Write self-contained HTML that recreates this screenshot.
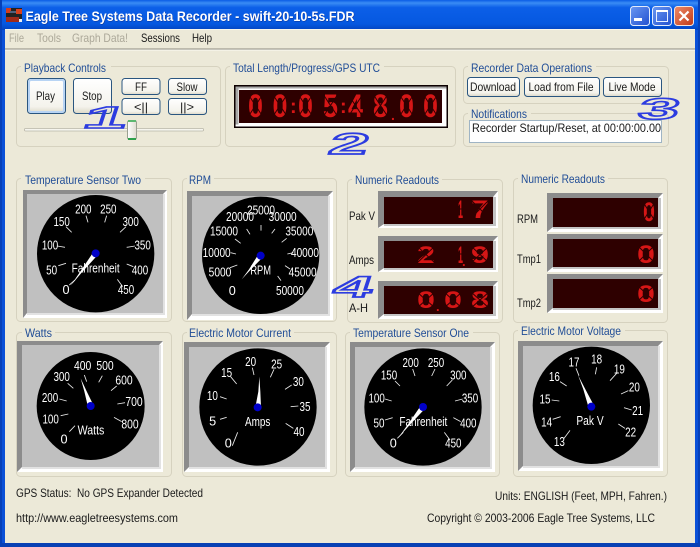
<!DOCTYPE html>
<html><head><meta charset="utf-8"><title>Eagle Tree Systems Data Recorder</title>
<style>
html,body{margin:0;padding:0;background:#ece9d8;width:700px;height:547px;overflow:hidden}
svg{display:block}
text{font-family:"Liberation Sans",sans-serif;font-size:11.700px;fill:#1a1a1a}
.g{fill:#1f4c96}
.m{fill:#aca899}
.grp{fill:none;stroke:#d6d2bf;stroke-width:1}
.bg{fill:#ece9d8}
.btn{fill:url(#bt);stroke:#2a5680;stroke-width:1}
.t{font-size:38px;fill:#fff;text-anchor:middle}
.tk{stroke:#e8e8e8;stroke-width:2.600;fill:none}
.led{font-weight:bold;fill:#d61616}
.seg{stroke:#2e0000;fill:none;stroke-width:1}
.an{font-weight:bold;fill:none;stroke:#2c3ce0;stroke-width:3;vector-effect:non-scaling-stroke}
</style></head><body>
<svg width="700" height="547" viewBox="0 0 700 547" xmlns="http://www.w3.org/2000/svg">
<defs>
<linearGradient id="tb" x1="0" y1="0" x2="0" y2="1"><stop offset="0" stop-color="#0a5ce6"/><stop offset=".1" stop-color="#3a8cf4"/><stop offset=".25" stop-color="#0c5fe8"/><stop offset=".8" stop-color="#0558e0"/><stop offset="1" stop-color="#0344c0"/></linearGradient>
<linearGradient id="bt" x1="0" y1="0" x2="0" y2="1"><stop offset="0" stop-color="#ffffff"/><stop offset=".8" stop-color="#f4f3ec"/><stop offset="1" stop-color="#dcd8c8"/></linearGradient>
<linearGradient id="wb" x1="0" y1="0" x2="1" y2="1"><stop offset="0" stop-color="#6a98f2"/><stop offset="1" stop-color="#2250d0"/></linearGradient>
<linearGradient id="wr" x1="0" y1="0" x2="1" y2="1"><stop offset="0" stop-color="#ee8a68"/><stop offset="1" stop-color="#c03a18"/></linearGradient>
<linearGradient id="th" x1="0" y1="0" x2="1" y2="0"><stop offset="0" stop-color="#fff"/><stop offset="1" stop-color="#dedcd0"/></linearGradient>
</defs>

<!-- window frame -->
<rect width="700" height="547" fill="#0a50d8"/>
<rect x="0" y="0" width="700" height="30" fill="url(#tb)"/>
<rect x="0" y="543" width="700" height="4" fill="#0840b4"/>
<rect x="0" y="0" width="2" height="547" fill="#0640b8"/>
<rect x="698" y="0" width="2" height="547" fill="#0640b8"/>
<rect x="5" y="29" width="690" height="514" fill="#ece9d8"/>
<rect x="5" y="29" width="690" height="1" fill="#f8f6ec"/>
<rect x="5" y="48.500" width="690" height="1" fill="#8e8c80"/>
<rect x="5" y="49.500" width="690" height="1" fill="#fbfaf3"/>

<!-- app icon -->
<rect x="6" y="8" width="16" height="14" fill="#222"/>
<rect x="6" y="8" width="5" height="5" fill="#d43c1c"/>
<rect x="16" y="9" width="6" height="5" fill="#d8401c"/>
<rect x="10" y="11" width="6" height="2" fill="#50607a"/>
<rect x="6" y="17" width="13" height="5" fill="#a02a18"/>
<rect x="19" y="19" width="3" height="3" fill="#f0f0f0"/>

<text x="26" y="21.500" textLength="329" lengthAdjust="spacingAndGlyphs" style="font-size:13.500px;font-weight:bold;fill:#0a2f90">Eagle Tree Systems Data Recorder - swift-20-10-5s.FDR</text>
<text x="25.500" y="21" textLength="329" lengthAdjust="spacingAndGlyphs" style="font-size:13.500px;font-weight:bold;fill:#fff">Eagle Tree Systems Data Recorder - swift-20-10-5s.FDR</text>

<!-- window buttons -->
<rect x="630.500" y="6.500" width="19" height="19" rx="3" fill="url(#wb)" stroke="#e4ecfc"/>
<rect x="634" y="18" width="8" height="3" fill="#fff"/>
<rect x="652.500" y="6.500" width="19" height="19" rx="3" fill="url(#wb)" stroke="#e4ecfc"/>
<rect x="656.500" y="10.500" width="11" height="11" fill="none" stroke="#e8f0ff"/>
<rect x="656" y="10" width="12" height="2" fill="#fff"/>
<rect x="674.500" y="6.500" width="19" height="19" rx="3" fill="url(#wr)" stroke="#f4e4dc"/>
<path d="M679.500 11.500l9 9M688.500 11.500l-9 9" stroke="#fff" stroke-width="2.200" fill="none"/>

<!-- menu -->
<text class="m" x="9" y="42" textLength="15" lengthAdjust="spacingAndGlyphs">File</text>
<text class="m" x="37" y="42" textLength="24" lengthAdjust="spacingAndGlyphs">Tools</text>
<text class="m" x="72" y="42" textLength="56" lengthAdjust="spacingAndGlyphs">Graph Data!</text>
<text x="141" y="42" textLength="39" lengthAdjust="spacingAndGlyphs">Sessions</text>
<text x="192" y="42" textLength="20" lengthAdjust="spacingAndGlyphs">Help</text>

<!-- group boxes -->
<rect class="grp" x="16.500" y="66.500" width="204" height="80" rx="4"/>
<rect class="bg" x="21" y="62" width="90" height="10"/>
<text class="g" x="24" y="72" textLength="82" lengthAdjust="spacingAndGlyphs">Playback Controls</text>

<rect class="grp" x="225.500" y="66.500" width="230" height="80" rx="4"/>
<rect class="bg" x="230" y="62" width="154" height="10"/>
<text class="g" x="233" y="72" textLength="147" lengthAdjust="spacingAndGlyphs">Total Length/Progress/GPS UTC</text>

<rect class="grp" x="463.500" y="66.500" width="205" height="37" rx="4"/>
<rect class="bg" x="468" y="62" width="128" height="10"/>
<text class="g" x="471" y="72" textLength="121" lengthAdjust="spacingAndGlyphs">Recorder Data Operations</text>

<rect class="grp" x="463.500" y="113.500" width="205" height="33" rx="4"/>
<rect class="bg" x="468" y="109" width="63" height="10"/>
<text class="g" x="471" y="118" textLength="56" lengthAdjust="spacingAndGlyphs">Notifications</text>

<rect class="grp" x="16.500" y="178.500" width="155" height="143" rx="4"/>
<rect class="bg" x="21" y="174" width="124" height="10"/>
<text class="g" x="25" y="184" textLength="116" lengthAdjust="spacingAndGlyphs">Temperature Sensor Two</text>

<rect class="grp" x="182.500" y="178.500" width="154" height="143" rx="4"/>
<rect class="bg" x="187" y="174" width="27" height="10"/>
<text class="g" x="189" y="184" textLength="22" lengthAdjust="spacingAndGlyphs">RPM</text>

<rect class="grp" x="347.500" y="179.500" width="155" height="143" rx="4"/>
<rect class="bg" x="352" y="175" width="90" height="10"/>
<text class="g" x="355" y="184" textLength="84" lengthAdjust="spacingAndGlyphs">Numeric Readouts</text>

<rect class="grp" x="513.500" y="178.500" width="154" height="144" rx="4"/>
<rect class="bg" x="518" y="174" width="90" height="10"/>
<text class="g" x="521" y="183" textLength="84" lengthAdjust="spacingAndGlyphs">Numeric Readouts</text>

<rect class="grp" x="16.500" y="332.500" width="155" height="144" rx="4"/>
<rect class="bg" x="22" y="328" width="33" height="10"/>
<text class="g" x="25" y="337" textLength="27" lengthAdjust="spacingAndGlyphs">Watts</text>

<rect class="grp" x="182.500" y="332.500" width="154" height="144" rx="4"/>
<rect class="bg" x="187" y="328" width="107" height="10"/>
<text class="g" x="189" y="337" textLength="102" lengthAdjust="spacingAndGlyphs">Electric Motor Current</text>

<rect class="grp" x="345.500" y="332.500" width="154" height="144" rx="4"/>
<rect class="bg" x="350" y="328" width="123" height="10"/>
<text class="g" x="353" y="337" textLength="116" lengthAdjust="spacingAndGlyphs">Temperature Sensor One</text>

<rect class="grp" x="513.500" y="330.500" width="154" height="146" rx="4"/>
<rect class="bg" x="518" y="326" width="107" height="10"/>
<text class="g" x="521" y="335" textLength="100" lengthAdjust="spacingAndGlyphs">Electric Motor Voltage</text>

<!-- playback buttons -->
<rect x="27.500" y="78.500" width="38" height="35" rx="3" fill="url(#bt)" stroke="#2a5680"/>
<rect x="29" y="80" width="35" height="32" rx="2" fill="none" stroke="#b8d4f4" stroke-width="2"/>
<text x="36" y="100" textLength="19" lengthAdjust="spacingAndGlyphs">Play</text>
<rect class="btn" x="73.500" y="78.500" width="38" height="35" rx="3"/>
<text x="82" y="100" textLength="20" lengthAdjust="spacingAndGlyphs">Stop</text>
<rect class="btn" x="122" y="78.500" width="38" height="16" rx="3"/>
<text x="135" y="91" textLength="12" lengthAdjust="spacingAndGlyphs">FF</text>
<rect class="btn" x="168.500" y="78.500" width="38" height="16" rx="3"/>
<text x="176.500" y="91" textLength="21" lengthAdjust="spacingAndGlyphs">Slow</text>
<rect class="btn" x="122" y="98.500" width="38" height="16" rx="3"/>
<text x="134" y="111" textLength="14" lengthAdjust="spacingAndGlyphs">&lt;||</text>
<rect class="btn" x="168.500" y="98.500" width="38" height="16" rx="3"/>
<text x="180" y="111" textLength="14" lengthAdjust="spacingAndGlyphs">||&gt;</text>

<!-- slider -->
<rect x="24.500" y="128.500" width="179" height="2.500" rx="1" fill="#f6f5ee" stroke="#b8b6a8" stroke-width=".8"/>
<rect x="127.500" y="120.500" width="9" height="19" rx="2" fill="url(#th)" stroke="#9aa090"/>
<rect x="128" y="120" width="8" height="2" fill="#5cb870"/>
<rect x="128" y="138" width="8" height="2" fill="#2ea04c"/>

<!-- main LED -->
<rect x="234" y="85" width="214" height="43" fill="#0c0000"/>
<rect x="235.500" y="86.500" width="211" height="40" fill="#ffffff"/>
<path d="M235.500 86.500h211v2h-208v36h-3z" fill="#a8a8a8"/>
<rect x="239" y="90" width="203" height="33" fill="#2e0000"/>
<g>
<text class="led" x="248" y="117" textLength="15" lengthAdjust="spacingAndGlyphs" style="font-size:32px">0</text>
<text class="led" x="272.500" y="117" textLength="15" lengthAdjust="spacingAndGlyphs" style="font-size:32px">0</text>
<text class="led" x="290" y="113" style="font-size:20px">:</text>
<text class="led" x="298" y="117" textLength="15" lengthAdjust="spacingAndGlyphs" style="font-size:32px">0</text>
<text class="led" x="323" y="117" textLength="15" lengthAdjust="spacingAndGlyphs" style="font-size:32px">5</text>
<text class="led" x="340" y="113" style="font-size:20px">:</text>
<text class="led" x="348" y="117" textLength="15" lengthAdjust="spacingAndGlyphs" style="font-size:32px">4</text>
<text class="led" x="373" y="117" textLength="15" lengthAdjust="spacingAndGlyphs" style="font-size:32px">8</text>
<text class="led" x="391" y="120" style="font-size:14px">.</text>
<text class="led" x="399" y="117" textLength="15" lengthAdjust="spacingAndGlyphs" style="font-size:32px">0</text>
<text class="led" x="423" y="117" textLength="15" lengthAdjust="spacingAndGlyphs" style="font-size:32px">0</text>
</g>
<path class="seg" d="M248 94l15 23M263 94l-15 23M272.500 94l15 23M287.500 94l-15 23M298 94l15 23M313 94l-15 23M323 94l15 23M338 94l-15 23M348 94l15 23M363 94l-15 23M373 94l15 23M388 94l-15 23M399 94l15 23M414 94l-15 23M423 94l15 23M438 94l-15 23"/>

<!-- operations buttons -->
<rect class="btn" x="467.500" y="77.500" width="52" height="19" rx="3"/>
<text x="470" y="91" textLength="46" lengthAdjust="spacingAndGlyphs">Download</text>
<rect class="btn" x="524.500" y="77.500" width="75" height="19" rx="3"/>
<text x="528.500" y="91" textLength="65" lengthAdjust="spacingAndGlyphs">Load from File</text>
<rect class="btn" x="603.500" y="77.500" width="58" height="19" rx="3"/>
<text x="608.500" y="91" textLength="47" lengthAdjust="spacingAndGlyphs">Live Mode</text>

<!-- notifications -->
<rect x="469.500" y="120.500" width="192" height="22" fill="#fff" stroke="#9fb4c4"/>
<text x="472" y="132" textLength="189" lengthAdjust="spacingAndGlyphs">Recorder Startup/Reset, at 00:00:00.00</text>

<!-- gauge frames -->
<rect x="23" y="190" width="144" height="128" fill="#fff"/><path d="M23 190h144l-4 4h-136v119l-4 5z" fill="#8c8c8c"/><rect x="27" y="194" width="136" height="119" fill="#c0c0c0"/><path d="M163 194v119h-136v2h138v-121z" fill="#e2e2e2"/>
<rect x="187" y="191" width="146" height="129" fill="#fff"/><path d="M187 191h146l-5 5h-136v118l-5 6z" fill="#8c8c8c"/><rect x="192" y="196" width="136" height="118" fill="#c0c0c0"/><path d="M328 196v118h-136v2h138v-120z" fill="#e2e2e2"/>
<rect x="17" y="341" width="146" height="131" fill="#fff"/><path d="M17 341h146l-4 4h-137v122l-5 5z" fill="#8c8c8c"/><rect x="22" y="345" width="137" height="122" fill="#c0c0c0"/><path d="M159 345v122h-137v2h139v-124z" fill="#e2e2e2"/>
<rect x="184" y="342" width="146" height="130" fill="#fff"/><path d="M184 342h146l-5 5h-136v120l-5 5z" fill="#8c8c8c"/><rect x="189" y="347" width="136" height="120" fill="#c0c0c0"/><path d="M325 347v120h-136v2h138v-122z" fill="#e2e2e2"/>
<rect x="350" y="342" width="145" height="130" fill="#fff"/><path d="M350 342h145l-5 5h-135v120l-5 5z" fill="#8c8c8c"/><rect x="355" y="347" width="135" height="120" fill="#c0c0c0"/><path d="M490 347v120h-135v2h137v-122z" fill="#e2e2e2"/>
<rect x="518" y="341" width="145" height="130" fill="#fff"/><path d="M518 341h145l-5 5h-135v120l-5 5z" fill="#8c8c8c"/><rect x="523" y="346" width="135" height="120" fill="#c0c0c0"/><path d="M658 346v120h-135v2h137v-122z" fill="#e2e2e2"/>

<!-- Gauge 1: Temperature Two -->
<g transform="translate(0,165) scale(.33333)">
<circle cx="287" cy="266" r="176"/>
<path class="tk" d="M208 360L225 345M175 302L198 295M172 243L195 247M198 185L215 202M258 152L264 172M320 152L314 172M378 185L360 202M380 247L405 243M380 297L400 305M352 343L368 365"/>
<text class="t" x="198" y="387" textLength="16">0</text>
<text class="t" x="155" y="328" textLength="33" lengthAdjust="spacingAndGlyphs">50</text>
<text class="t" x="150" y="253" textLength="49" lengthAdjust="spacingAndGlyphs">100</text>
<text class="t" x="185" y="183" textLength="49" lengthAdjust="spacingAndGlyphs">150</text>
<text class="t" x="250" y="145" textLength="49" lengthAdjust="spacingAndGlyphs">200</text>
<text class="t" x="325" y="145" textLength="49" lengthAdjust="spacingAndGlyphs">250</text>
<text class="t" x="392" y="183" textLength="49" lengthAdjust="spacingAndGlyphs">300</text>
<text class="t" x="428" y="253" textLength="49" lengthAdjust="spacingAndGlyphs">350</text>
<text class="t" x="420" y="328" textLength="49" lengthAdjust="spacingAndGlyphs">400</text>
<text class="t" x="378" y="387" textLength="49" lengthAdjust="spacingAndGlyphs">450</text>
<text class="t" x="287" y="323" textLength="144" lengthAdjust="spacingAndGlyphs">Fahrenheit</text>
<polygon points="281,260 293,270 244,324 212,362 240,321" fill="#fff"/>
<circle cx="287" cy="265" r="12" fill="#0000c8"/>
</g>

<!-- Gauge 2: RPM -->
<g transform="translate(0,165) scale(.33333)">
<circle cx="782" cy="271" r="176"/>
<path class="tk" d="M690 308L712 300M692 263L708 267M705 222L722 235M740 192L750 208M783 180L783 197M815 205L825 192M845 232L860 220M862 267L880 263M855 302L870 312M833 333L843 347"/>
<text class="t" x="697" y="390" textLength="16">0</text>
<text class="t" x="660" y="335" textLength="68" lengthAdjust="spacingAndGlyphs">5000</text>
<text class="t" x="650" y="276" textLength="84" lengthAdjust="spacingAndGlyphs">10000</text>
<text class="t" x="672" y="211" textLength="84" lengthAdjust="spacingAndGlyphs">15000</text>
<text class="t" x="720" y="168" textLength="84" lengthAdjust="spacingAndGlyphs">20000</text>
<text class="t" x="783" y="148" textLength="84" lengthAdjust="spacingAndGlyphs">25000</text>
<text class="t" x="848" y="168" textLength="84" lengthAdjust="spacingAndGlyphs">30000</text>
<text class="t" x="898" y="211" textLength="84" lengthAdjust="spacingAndGlyphs">35000</text>
<text class="t" x="915" y="276" textLength="84" lengthAdjust="spacingAndGlyphs">40000</text>
<text class="t" x="908" y="335" textLength="84" lengthAdjust="spacingAndGlyphs">45000</text>
<text class="t" x="870" y="390" textLength="84" lengthAdjust="spacingAndGlyphs">50000</text>
<text class="t" x="782" y="328" textLength="62" lengthAdjust="spacingAndGlyphs">RPM</text>
<polygon points="776,267 788,277 750,316 725,343 747,313" fill="#fff"/>
<circle cx="782" cy="272" r="12" fill="#0000c8"/>
</g>

<!-- Gauge 3: Watts -->
<g transform="translate(0,325) scale(.33333)">
<circle cx="272" cy="243" r="162"/>
<path class="tk" d="M208 320L225 302M182 272L205 267M178 222L200 228M203 175L220 190M253 150L260 170M307 152L296 172M350 183L333 197M352 237L375 233M342 277L365 290"/>
<text class="t" x="192" y="356" textLength="16">0</text>
<text class="t" x="152" y="296" textLength="49" lengthAdjust="spacingAndGlyphs">100</text>
<text class="t" x="150" y="231" textLength="49" lengthAdjust="spacingAndGlyphs">200</text>
<text class="t" x="185" y="168" textLength="49" lengthAdjust="spacingAndGlyphs">300</text>
<text class="t" x="248" y="135" textLength="52" lengthAdjust="spacingAndGlyphs">400</text>
<text class="t" x="315" y="135" textLength="52" lengthAdjust="spacingAndGlyphs">500</text>
<text class="t" x="372" y="178" textLength="52" lengthAdjust="spacingAndGlyphs">600</text>
<text class="t" x="402" y="243" textLength="52" lengthAdjust="spacingAndGlyphs">700</text>
<text class="t" x="390" y="310" textLength="52" lengthAdjust="spacingAndGlyphs">800</text>
<text class="t" x="273" y="328" textLength="80" lengthAdjust="spacingAndGlyphs">Watts</text>
<polygon points="264,246 280,240 259,197 242,160 253,199" fill="#fff"/>
<circle cx="272" cy="243" r="12" fill="#0000c8"/>
</g>

<!-- Gauge 4: Current -->
<g transform="translate(0,325) scale(.33333)">
<circle cx="774" cy="246" r="176"/>
<path class="tk" d="M697 362L713 322M660 283L680 277M660 215L680 222M692 155L710 177M757 128L762 150M822 133L811 157M875 180L855 193M872 245L895 243M857 295L880 310"/>
<text class="t" x="685" y="368" textLength="16">0</text>
<text class="t" x="638" y="301" textLength="16">5</text>
<text class="t" x="637" y="225" textLength="33" lengthAdjust="spacingAndGlyphs">10</text>
<text class="t" x="680" y="156" textLength="33" lengthAdjust="spacingAndGlyphs">15</text>
<text class="t" x="752" y="123" textLength="33" lengthAdjust="spacingAndGlyphs">20</text>
<text class="t" x="830" y="131" textLength="33" lengthAdjust="spacingAndGlyphs">25</text>
<text class="t" x="895" y="183" textLength="33" lengthAdjust="spacingAndGlyphs">30</text>
<text class="t" x="915" y="258" textLength="33" lengthAdjust="spacingAndGlyphs">35</text>
<text class="t" x="897" y="333" textLength="33" lengthAdjust="spacingAndGlyphs">40</text>
<text class="t" x="773" y="303" textLength="76" lengthAdjust="spacingAndGlyphs">Amps</text>
<polygon points="766,247 783,247 781,200 778,155 775,200" fill="#fff"/>
<circle cx="773" cy="247" r="12" fill="#0000c8"/>
</g>

<!-- Gauge 5: Temperature One -->
<g transform="translate(340,325) scale(.33333)">
<circle cx="249" cy="246" r="176"/>
<path class="tk" d="M172 340L190 322M135 285L158 278M135 222L155 228M165 168L180 183M218 132L225 153M285 132L275 153M337 165L320 183M345 228L368 222M340 278L362 290M313 322L330 345"/>
<text class="t" x="160" y="368" textLength="16">0</text>
<text class="t" x="117" y="308" textLength="33" lengthAdjust="spacingAndGlyphs">50</text>
<text class="t" x="110" y="233" textLength="49" lengthAdjust="spacingAndGlyphs">100</text>
<text class="t" x="147" y="163" textLength="49" lengthAdjust="spacingAndGlyphs">150</text>
<text class="t" x="212" y="126" textLength="49" lengthAdjust="spacingAndGlyphs">200</text>
<text class="t" x="288" y="126" textLength="49" lengthAdjust="spacingAndGlyphs">250</text>
<text class="t" x="355" y="163" textLength="49" lengthAdjust="spacingAndGlyphs">300</text>
<text class="t" x="390" y="233" textLength="49" lengthAdjust="spacingAndGlyphs">350</text>
<text class="t" x="385" y="308" textLength="49" lengthAdjust="spacingAndGlyphs">400</text>
<text class="t" x="340" y="368" textLength="49" lengthAdjust="spacingAndGlyphs">450</text>
<text class="t" x="250" y="303" textLength="144" lengthAdjust="spacingAndGlyphs">Fahrenheit</text>
<polygon points="243,241 255,251 210,299 175,338 206,295" fill="#fff"/>
<circle cx="249" cy="246" r="12" fill="#0000c8"/>
</g>

<!-- Gauge 6: Voltage -->
<g transform="translate(340,325) scale(.33333)">
<circle cx="754" cy="241" r="176"/>
<path class="tk" d="M672 340L690 316M638 283L662 275M635 225L658 228M660 170L680 183M708 130L717 152M770 127L766 148M830 145L810 167M865 197L843 207M875 255L852 248M855 310L835 297"/>
<text class="t" x="658" y="363" textLength="33" lengthAdjust="spacingAndGlyphs">13</text>
<text class="t" x="620" y="305" textLength="33" lengthAdjust="spacingAndGlyphs">14</text>
<text class="t" x="615" y="236" textLength="33" lengthAdjust="spacingAndGlyphs">15</text>
<text class="t" x="643" y="168" textLength="33" lengthAdjust="spacingAndGlyphs">16</text>
<text class="t" x="702" y="125" textLength="33" lengthAdjust="spacingAndGlyphs">17</text>
<text class="t" x="770" y="116" textLength="33" lengthAdjust="spacingAndGlyphs">18</text>
<text class="t" x="838" y="145" textLength="33" lengthAdjust="spacingAndGlyphs">19</text>
<text class="t" x="883" y="200" textLength="33" lengthAdjust="spacingAndGlyphs">20</text>
<text class="t" x="893" y="270" textLength="33" lengthAdjust="spacingAndGlyphs">21</text>
<text class="t" x="872" y="335" textLength="33" lengthAdjust="spacingAndGlyphs">22</text>
<text class="t" x="750" y="300" textLength="82" lengthAdjust="spacingAndGlyphs">Pak V</text>
<polygon points="746,248 762,242 735,191 714,150 730,193" fill="#fff"/>
<circle cx="754" cy="245" r="12" fill="#0000c8"/>
</g>

<!-- left numeric readouts -->
<rect x="378" y="191" width="120" height="37" fill="#fff"/><path d="M378 191h120l-5 6h-109v27l-6 4z" fill="#8c8c8c"/><rect x="493" y="197" width="3" height="27" fill="#c4c4c4"/><rect x="384" y="224" width="112" height="2" fill="#c4c4c4"/><rect x="384" y="197" width="109" height="27" fill="#2e0000"/>
<rect x="378" y="236" width="120" height="36" fill="#fff"/><path d="M378 236h120l-5 5h-109v27l-6 4z" fill="#8c8c8c"/><rect x="493" y="241" width="3" height="27" fill="#c4c4c4"/><rect x="384" y="268" width="112" height="2" fill="#c4c4c4"/><rect x="384" y="241" width="109" height="27" fill="#2e0000"/>
<rect x="378" y="281" width="120" height="38" fill="#fff"/><path d="M378 281h120l-5 5h-109v28l-6 5z" fill="#8c8c8c"/><rect x="493" y="286" width="3" height="28" fill="#c4c4c4"/><rect x="384" y="314" width="112" height="2" fill="#c4c4c4"/><rect x="384" y="286" width="109" height="28" fill="#2e0000"/>

<text x="349" y="220" textLength="26" lengthAdjust="spacingAndGlyphs">Pak V</text>
<text x="349" y="264" textLength="25" lengthAdjust="spacingAndGlyphs">Amps</text>
<text x="349" y="312" textLength="19" lengthAdjust="spacingAndGlyphs">A-H</text>

<text class="led" x="458" y="218" textLength="5" lengthAdjust="spacingAndGlyphs" style="font-size:25px">1</text>
<text class="led" x="471" y="218" textLength="18" lengthAdjust="spacingAndGlyphs" style="font-size:25px">7</text>
<text class="led" x="417" y="263" textLength="18" lengthAdjust="spacingAndGlyphs" style="font-size:24px">2</text>
<text class="led" x="458" y="263" textLength="5" lengthAdjust="spacingAndGlyphs" style="font-size:24px">1</text>
<text class="led" x="462" y="266" style="font-size:13px">.</text>
<text class="led" x="471" y="263" textLength="18" lengthAdjust="spacingAndGlyphs" style="font-size:24px">9</text>
<text class="led" x="417" y="308" textLength="18" lengthAdjust="spacingAndGlyphs" style="font-size:24px">0</text>
<text class="led" x="436" y="311" style="font-size:13px">.</text>
<text class="led" x="444" y="308" textLength="18" lengthAdjust="spacingAndGlyphs" style="font-size:24px">0</text>
<text class="led" x="471" y="308" textLength="18" lengthAdjust="spacingAndGlyphs" style="font-size:24px">8</text>
<path class="seg" d="M458 209h5M471 200l18 18M489 200l-18 18M417 246l18 17M435 246l-18 17M458 254h5M471 246l18 17M489 246l-18 17M417 292l18 16M435 292l-18 16M444 292l18 16M462 292l-18 16M471 292l18 16M489 292l-18 16"/>

<!-- right numeric readouts -->
<rect x="547" y="193" width="116" height="39" fill="#fff"/><path d="M547 193h116l-5 5h-105v29l-6 5z" fill="#8c8c8c"/><rect x="658" y="198" width="3" height="29" fill="#c4c4c4"/><rect x="553" y="227" width="108" height="2" fill="#c4c4c4"/><rect x="553" y="198" width="105" height="29" fill="#2e0000"/>
<rect x="547" y="234" width="116" height="38" fill="#fff"/><path d="M547 234h116l-5 5h-105v28l-6 5z" fill="#8c8c8c"/><rect x="658" y="239" width="3" height="28" fill="#c4c4c4"/><rect x="553" y="267" width="108" height="2" fill="#c4c4c4"/><rect x="553" y="239" width="105" height="28" fill="#2e0000"/>
<rect x="547" y="274" width="116" height="39" fill="#fff"/><path d="M547 274h116l-5 5h-105v29l-6 5z" fill="#8c8c8c"/><rect x="658" y="279" width="3" height="29" fill="#c4c4c4"/><rect x="553" y="308" width="108" height="2" fill="#c4c4c4"/><rect x="553" y="279" width="105" height="29" fill="#2e0000"/>

<text x="517" y="223" textLength="21" lengthAdjust="spacingAndGlyphs">RPM</text>
<text x="517" y="263" textLength="24" lengthAdjust="spacingAndGlyphs">Tmp1</text>
<text x="517" y="307" textLength="24" lengthAdjust="spacingAndGlyphs">Tmp2</text>

<text class="led" x="643" y="221" textLength="12" lengthAdjust="spacingAndGlyphs" style="font-size:27px">0</text>
<text class="led" x="637" y="263" textLength="18" lengthAdjust="spacingAndGlyphs" style="font-size:25px">0</text>
<text class="led" x="637" y="302" textLength="18" lengthAdjust="spacingAndGlyphs" style="font-size:24px">0</text>
<path class="seg" d="M643 202l12 19M655 202l-12 19M637 245l18 18M655 245l-18 18M637 285l18 17M655 285l-18 17"/>

<!-- status text -->
<text x="16" y="497" textLength="187" lengthAdjust="spacingAndGlyphs" xml:space="preserve">GPS Status:  No GPS Expander Detected</text>
<text x="16" y="522" textLength="162" lengthAdjust="spacingAndGlyphs">http://www.eagletreesystems.com</text>
<text x="495" y="500" textLength="172" lengthAdjust="spacingAndGlyphs">Units: ENGLISH (Feet, MPH, Fahren.)</text>
<text x="427" y="522" textLength="228" lengthAdjust="spacingAndGlyphs">Copyright © 2003-2006 Eagle Tree Systems, LLC</text>

<!-- blue handwritten annotations -->
<text class="an" transform="translate(81,128) skewX(-18) scale(2.300,.9)" style="font-size:34px">1</text>
<text class="an" transform="translate(327,154) skewX(-18) scale(2.100,.9)" style="font-size:33px">2</text>
<text class="an" transform="translate(636,119) skewX(-18) scale(2.200,.9)" style="font-size:33px">3</text>
<text class="an" transform="translate(331,297) skewX(-18) scale(2.100,.9)" style="font-size:33px">4</text>
</svg>
</body></html>
